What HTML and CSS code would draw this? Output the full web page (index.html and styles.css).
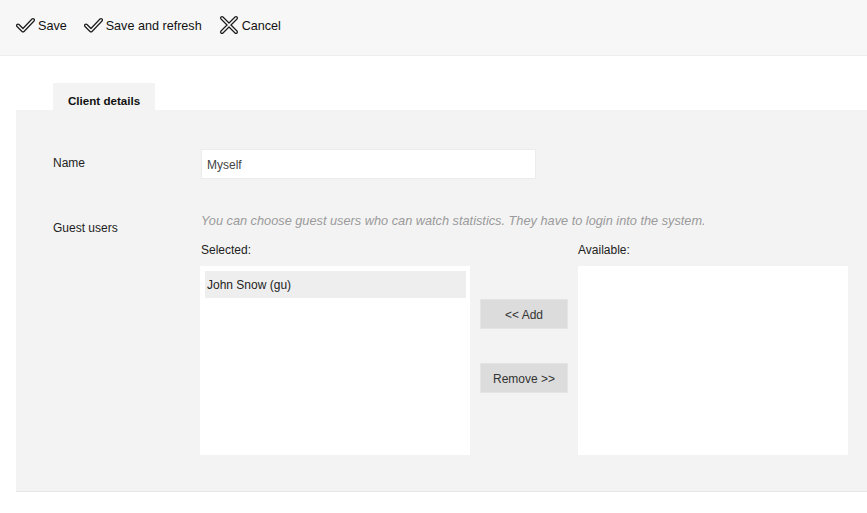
FILE: index.html
```
<!DOCTYPE html>
<html>
<head>
<meta charset="utf-8">
<link rel="stylesheet" href="styles.css">
</head>
<body>
<div class="toolbar">
  <a class="tool">
    <svg class="ico" width="19" height="18" viewBox="0 0 19 18"><path d="M2 9.5 L7 14.5 L17 4" fill="none" stroke="#1a1a1a" stroke-width="4" stroke-linecap="round" stroke-linejoin="round"/><path d="M2 9.5 L7 14.5 L17 4" fill="none" stroke="#f7f7f7" stroke-width="1.6" stroke-linecap="round" stroke-linejoin="round"/></svg>
    <span>Save</span>
  </a>
  <a class="tool">
    <svg class="ico" width="19" height="18" viewBox="0 0 19 18"><path d="M2 9.5 L7 14.5 L17 4" fill="none" stroke="#1a1a1a" stroke-width="4" stroke-linecap="round" stroke-linejoin="round"/><path d="M2 9.5 L7 14.5 L17 4" fill="none" stroke="#f7f7f7" stroke-width="1.6" stroke-linecap="round" stroke-linejoin="round"/></svg>
    <span>Save and refresh</span>
  </a>
  <a class="tool">
    <svg class="ico" width="20" height="20" viewBox="0 0 20 20"><path d="M3 3 L17 17 M17 3 L3 17" fill="none" stroke="#1a1a1a" stroke-width="4" stroke-linecap="round"/><path d="M3 3 L17 17 M17 3 L3 17" fill="none" stroke="#f7f7f7" stroke-width="1.6" stroke-linecap="round"/></svg>
    <span>Cancel</span>
  </a>
</div>

<div class="content">
  <div class="tabs">
    <div class="tab">Client details</div>
  </div>
  <div class="panel">
    <div class="row">
      <div class="label">Name</div>
      <div class="field">
        <div class="input">Myself</div>
      </div>
    </div>
    <div class="row row-guests">
      <div class="label">Guest users</div>
      <div class="field">
        <div class="hint">You can choose guest users who can watch statistics. They have to login into the system.</div>
        <div class="picker">
          <div class="col col-selected">
            <div class="col-title">Selected:</div>
            <div class="listbox">
              <div class="item">John Snow (gu)</div>
            </div>
          </div>
          <div class="actions">
            <div class="btn">&lt;&lt; Add</div>
            <div class="btn">Remove &gt;&gt;</div>
          </div>
          <div class="col">
            <div class="col-title">Available:</div>
            <div class="listbox"></div>
          </div>
        </div>
      </div>
    </div>
  </div>
</div>
</body>
</html>
```

FILE: styles.css
```
html, body {
  margin: 0;
  padding: 0;
  background: #ffffff;
  font-family: "Liberation Sans", Arial, sans-serif;
  font-size: 12px;
  color: #222;
  overflow: hidden;
}

.toolbar {
  display: flex;
  align-items: center;
  height: 50px;
  padding: 0 0 5px 16px;
  background: #f7f7f7;
  border-bottom: 1px solid #ededed;
  gap: 17px;
}

.tool {
  display: flex;
  align-items: center;
  gap: 3px;
  font-size: 12.6px;
  color: #111;
  cursor: pointer;
}

.tool span {
  padding-top: 2px;
}

.ico {
  display: block;
}

.content {
  padding: 27px 0 0 16px;
}

.tabs {
  display: flex;
  padding-left: 37px;
}

.tab {
  background: #f3f3f3;
  font-weight: bold;
  font-size: 11.6px;
  line-height: 14px;
  padding: 11px 15px 2px 15px;
  color: #111;
}

.panel {
  background: #f3f3f3;
  border-bottom: 1px solid #e6e6e6;
  padding: 39px 0 36px 37px;
}

.row {
  display: flex;
}

.row-guests {
  margin-top: 35px;
}

.label {
  width: 148px;
  padding-top: 7px;
  line-height: 14px;
  font-size: 12px;
  color: #222;
}

.field {
  flex: 1;
}

.input {
  width: 328px;
  height: 28px;
  line-height: 30px;
  padding-left: 5px;
  background: #fff;
  border: 1px solid #ececec;
  color: #444;
  font-size: 12px;
}

.hint {
  font-style: italic;
  font-size: 12.75px;
  color: #9a9a9a;
  line-height: 14px;
}

.picker {
  display: flex;
  margin-top: 14px;
  margin-left: -1px;
}

.col {
  display: flex;
  flex-direction: column;
}

.col-title {
  line-height: 14px;
  padding-top: 1px;
  margin-bottom: 9px;
  color: #222;
}

.col-selected .col-title {
  padding-left: 1px;
}

.listbox {
  width: 270px;
  height: 189px;
  background: #fff;
  box-sizing: border-box;
  padding: 5px 4px 5px 5px;
}

.item {
  background: #eeeeee;
  height: 27px;
  line-height: 29px;
  padding-left: 2px;
  color: #222;
}

.actions {
  display: flex;
  flex-direction: column;
  gap: 34px;
  padding-top: 57px;
  margin: 0 10px;
}

.btn {
  width: 86px;
  height: 28px;
  line-height: 30px;
  text-align: center;
  background: #dcdcdc;
  border: 1px solid #e4e4e4;
  color: #333;
  font-size: 12px;
}
```
